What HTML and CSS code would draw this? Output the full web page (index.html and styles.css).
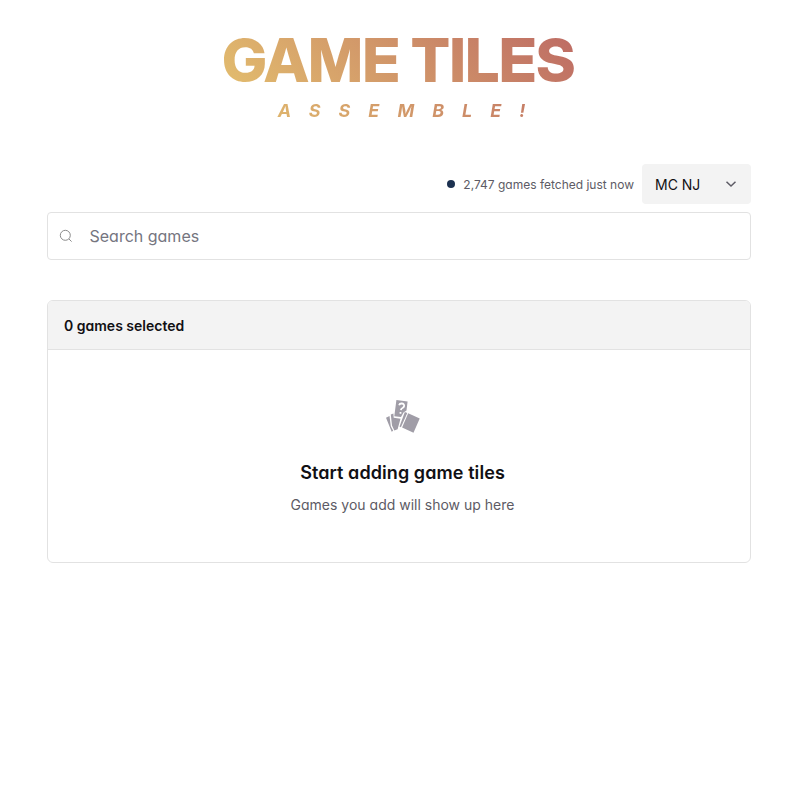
FILE: index.html
```html
<!DOCTYPE html>
<html lang="en">
<head>
<meta charset="utf-8">
<title>Game Tiles Assemble!</title>
<link rel="stylesheet" href="styles.css">
</head>
<body>
<main class="page">
  <header class="brand">
    <h1 class="brand-title">GAME TILES</h1>
    <p class="brand-sub">ASSEMBLE!</p>
  </header>
  <div class="toolbar">
    <span class="dot"></span>
    <span class="status">2,747 games fetched just now</span>
    <button class="select" type="button">
      <span>MC NJ</span>
      <svg class="chevron" viewBox="0 0 20 20"><path d="M5.500 7.800 10 12l4.500-4.200" fill="none" stroke="#5d5b65" stroke-width="1.500"/></svg>
    </button>
  </div>
  <label class="search">
    <svg class="search-icon" viewBox="0 0 14 14" fill="none" stroke="#8b8b8b"><circle cx="6.300" cy="6.300" r="5"/><path d="m10 10 2.600 2.600"/></svg>
    <input class="search-input" type="text" placeholder="Search games">
  </label>
  <section class="card">
    <h2 class="card-head">0 games selected</h2>
    <div class="empty">
      <svg class="tiles" viewBox="0 0 34 34" fill="#a09da7">
        <path d="M0 17.700 3.500 15.900 4.800 26.200 7.200 30.700 5.700 31.700Z"/>
        <path d="M4.800 14.500 7.400 13.500 7.700 17.800 14.500 18.700 11.600 29.300 8.300 30.500 6 25.600Z"/>
        <path d="M10.400 0 21.600 1.600 20.500 10.500 17.500 12.500 15 17 8.300 16.200Z"/>
        <path d="m18.800 12 2.500 1.100-6.400 14.200-1.400-.8Z"/>
        <path d="m22.200 13.200 11.500 5.400-6.200 14.200-11.400-5.400Z"/>
        <path d="M13.100 5.200Q13.600 3.400 15.700 3.500 18.500 3.700 18.100 6.200 17.900 7.300 16.500 8 15 8.700 14.900 10.100M14.500 12v1.800" fill="none" stroke="#fff" stroke-width="1.800"/>
      </svg>
      <h3 class="empty-title">Start adding game tiles</h3>
      <p class="empty-text">Games you add will show up here</p>
    </div>
  </section>
</main>
</body>
</html>
```
FILE: styles.css
```css
* { box-sizing: border-box; }
body {
  margin: 0;
  background: #fff;
  color: #111014;
  font-family: Inter, sans-serif;
  font-feature-settings: "cv11";
}
h1, h2, h3, p { margin: 0; }
.page { width: 704px; margin: 0 0 0 47px; padding-top: 30px; }
.brand {
  display: flex;
  flex-direction: column;
  align-items: center;
}
.brand-title, .brand-sub {
  background: linear-gradient(45deg, #e3be6e, #bd6a64);
  -webkit-background-clip: text;
  background-clip: text;
  color: transparent;
}
.brand-title {
  font-family: "Inter Display", Inter, sans-serif;
  font-size: 60px;
  line-height: 60px;
  font-weight: 800;
  letter-spacing: -0.3px;
}
.brand-sub {
  width: 440px;
  margin-top: 7px;
  padding-left: 23px;
  background-image: linear-gradient(45deg, #e3be6e 12%, #bd6a64);
  text-align: center;
  font-size: 18px;
  line-height: 28px;
  font-style: italic;
  font-weight: 700;
  letter-spacing: 18px;
}
.toolbar {
  display: flex;
  justify-content: flex-end;
  align-items: center;
  height: 40px;
  margin-top: 39px;
}
.dot { width: 8px; height: 8px; border-radius: 50%; background: #1c3150; }
.status { margin: 0 8px; font-size: 12px; color: #5d5b65; }
.select {
  display: flex;
  align-items: center;
  justify-content: space-between;
  width: 109px;
  height: 40px;
  padding: 0 10px 0 13px;
  border: 0;
  border-radius: 4px;
  background: #f3f3f3;
  color: #111014;
  font: inherit;
  font-size: 14px;
}
.chevron { width: 20px; height: 20px; }
.search {
  display: flex;
  align-items: center;
  height: 48px;
  margin-top: 8px;
  padding-left: 11px;
  border: 1px solid #e2e2e2;
  border-radius: 4px;
}
.search-icon { width: 14px; height: 14px; margin-right: 16.500px; }
.search-input {
  flex: 1;
  padding: 0;
  border: 0;
  outline: 0;
  background: none;
  font: inherit;
  font-size: 16px;
}
.search-input::placeholder { color: #75757f; }
.card {
  height: 263px;
  margin-top: 40px;
  border: 1px solid #e2e2e2;
  border-radius: 6px;
  overflow: hidden;
}
.card-head {
  height: 49px;
  padding: 1px 16px 0;
  border-bottom: 1px solid #e2e2e2;
  background: #f3f3f3;
  font-size: 14px;
  line-height: 48px;
  font-weight: 600;
}
.empty {
  display: flex;
  flex-direction: column;
  align-items: center;
  padding: 50px 0 0 7px;
}
.tiles { width: 34px; height: 34px; }
.empty-title { margin-top: 25px; font-size: 18px; line-height: 28px; font-weight: 600; letter-spacing: 0.08px; }
.empty-text { margin-top: 8px; font-size: 14px; line-height: 20px; color: #5d5b65; }
```
